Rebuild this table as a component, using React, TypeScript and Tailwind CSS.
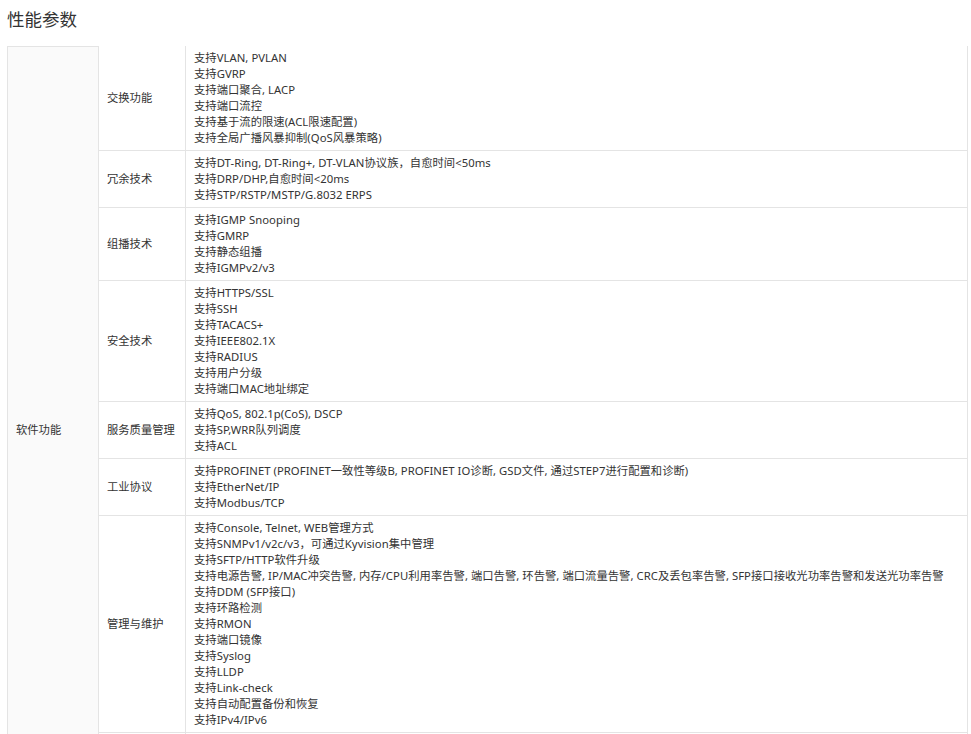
const rows: { name: string; items: string[] }[] = [
  {
    name: "交换功能",
    items: [
      "支持VLAN, PVLAN",
      "支持GVRP",
      "支持端口聚合, LACP",
      "支持端口流控",
      "支持基于流的限速(ACL限速配置)",
      "支持全局广播风暴抑制(QoS风暴策略)",
    ],
  },
  {
    name: "冗余技术",
    items: [
      "支持DT-Ring, DT-Ring+, DT-VLAN协议族，自愈时间<50ms",
      "支持DRP/DHP,自愈时间<20ms",
      "支持STP/RSTP/MSTP/G.8032 ERPS",
    ],
  },
  {
    name: "组播技术",
    items: ["支持IGMP Snooping", "支持GMRP", "支持静态组播", "支持IGMPv2/v3"],
  },
  {
    name: "安全技术",
    items: [
      "支持HTTPS/SSL",
      "支持SSH",
      "支持TACACS+",
      "支持IEEE802.1X",
      "支持RADIUS",
      "支持用户分级",
      "支持端口MAC地址绑定",
    ],
  },
  {
    name: "服务质量管理",
    items: ["支持QoS, 802.1p(CoS), DSCP", "支持SP,WRR队列调度", "支持ACL"],
  },
  {
    name: "工业协议",
    items: [
      "支持PROFINET (PROFINET一致性等级B, PROFINET IO诊断, GSD文件, 通过STEP7进行配置和诊断)",
      "支持EtherNet/IP",
      "支持Modbus/TCP",
    ],
  },
  {
    name: "管理与维护",
    items: [
      "支持Console, Telnet, WEB管理方式",
      "支持SNMPv1/v2c/v3，可通过Kyvision集中管理",
      "支持SFTP/HTTP软件升级",
      "支持电源告警, IP/MAC冲突告警, 内存/CPU利用率告警, 端口告警, 环告警, 端口流量告警, CRC及丢包率告警, SFP接口接收光功率告警和发送光功率告警",
      "支持DDM (SFP接口)",
      "支持环路检测",
      "支持RMON",
      "支持端口镜像",
      "支持Syslog",
      "支持LLDP",
      "支持Link-check",
      "支持自动配置备份和恢复",
      "支持IPv4/IPv6",
    ],
  },
];

export default function App() {
  return (
    <div
      className="min-h-screen bg-white px-[7px] text-[#333]"
      style={{ fontFamily: '"Noto Sans", "Noto Sans CJK SC", sans-serif' }}
    >
      <h2 className="pt-[6px] text-[17.5px] leading-[26px] text-[#333]">性能参数</h2>

      <div className="mt-[14px] flex w-[961px] text-[11.3px] leading-[16px]">
        <div className="flex w-[92px] shrink-0 items-center border border-[#e4e4e4] bg-[#fafafa] pl-[8px]">
          软件功能
        </div>
        <div className="flex min-w-0 flex-1 flex-col border-r border-[#e4e4e4]">
          {rows.map((r) => (
            <div key={r.name} className="flex border-b border-[#e4e4e4]">
              <div className="flex w-[87px] shrink-0 items-center border-r border-[#e4e4e4] pl-[8px]">
                {r.name}
              </div>
              <div className="min-w-0 flex-1 px-[8px] py-[4px] tracking-[0.04px]">
                {r.items.map((t) => (
                  <div key={t} className="whitespace-nowrap">
                    {t}
                  </div>
                ))}
              </div>
            </div>
          ))}
          <div className="flex h-[81px] border-b border-[#e4e4e4]">
            <div className="w-[87px] shrink-0 border-r border-[#e4e4e4]" />
            <div className="flex-1" />
          </div>
        </div>
      </div>
    </div>
  );
}
